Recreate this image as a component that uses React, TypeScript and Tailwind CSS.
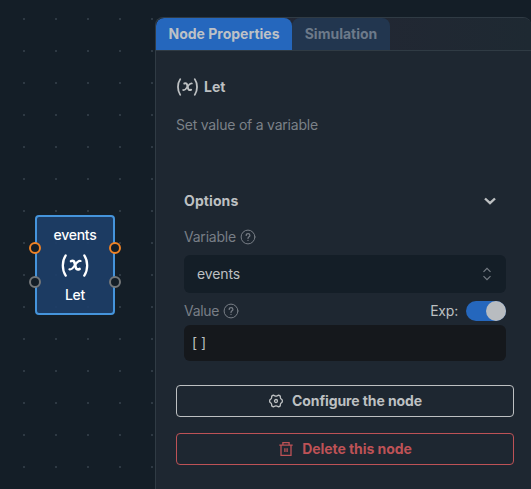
import React from "react";

function VariableIcon({ className }: { className: string }) {
  return (
    <svg
      className={className}
      viewBox="0 0 28 24"
      fill="none"
      stroke="currentColor"
      strokeLinecap="round"
      strokeLinejoin="round"
    >
      <path d="M4.300 1.500C.3 7.500.3 16.500 4.300 22.500M23.700 1.500c4 6 4 15 0 21" strokeWidth="2.400" />
      <path d="M9.800 7.400c2.600-1 3.400.2 4 2.600l.8 3.400c.6 2.400 1.600 3.300 4.200 2.200" strokeWidth="2.700" />
      <path d="M19.800 7.300c-2.300-.6-3.900 1.300-5.800 4.200-1.900 3-3.500 5.300-5.800 4.500" strokeWidth="2.300" />
    </svg>
  );
}

function GearIcon() {
  return (
    <svg className="size-4" viewBox="0 0 16 16" fill="none" stroke="currentColor" strokeLinejoin="round">
      <path
        d="M5.300 2.100 6.900 2.900Q8 3.500 9.100 2.900L10.700 2.100 12.300 3.100 12.400 4.800Q12.500 5.800 13.400 6.200L14.300 6.900V9.100L13.400 9.800Q12.500 10.200 12.400 11.200L12.300 12.900 10.700 13.900 9.100 13.100Q8 12.500 6.900 13.100L5.300 13.900 3.700 12.900 3.600 11.200Q3.500 10.200 2.600 9.800L1.700 9.100V6.900L2.600 6.200Q3.500 5.800 3.600 4.800L3.700 3.100Z"
        strokeWidth="1.300"
      />
      <circle cx="8" cy="8" r="1.500" strokeWidth="1.300" />
    </svg>
  );
}

function TrashIcon() {
  return (
    <svg className="size-4" viewBox="0 0 16 16" fill="none" stroke="currentColor" strokeWidth="1.300">
      <path d="M1.300 4.200h13.400M4.900 4V1.700h6.200V4M3 4.200v10.100h10V4.200M6.900 7.300v3.700M9.100 7.300v3.700" />
    </svg>
  );
}

function Help() {
  return (
    <svg
      className="size-4"
      viewBox="0 0 16 16"
      fill="none"
      stroke="currentColor"
      strokeWidth="1"
      strokeLinecap="round"
    >
      <circle cx="8" cy="8" r="6.900" />
      <path d="M6.200 6.400c0-2.500 3.700-2.500 3.700 0 0 1.300-1.900 1.500-1.900 3M8 11.300v.2" strokeWidth="1.200" />
    </svg>
  );
}

function Port({ className }: { className: string }) {
  return <span className={`absolute size-3 rounded-full border-2 bg-[#141e27] ${className}`} />;
}

function FlowNode() {
  return (
    <div className="absolute top-[215px] left-[35px] flex h-[100px] w-20 flex-col items-center rounded-[4px] border-2 border-[#4594db] bg-[#1d3e69]/90 pt-2 text-white">
      <span className="text-sm leading-5 font-medium tracking-[-0.25px]">events</span>
      <VariableIcon className="mt-[9px] h-[23px] w-7" />
      <span className="mt-2 text-sm leading-5 font-medium tracking-[-0.25px]">Let</span>
      <Port className="top-[25px] -left-2 border-[#f08224]" />
      <Port className="top-[25px] -right-2 border-[#f08224]" />
      <Port className="top-[59px] -left-2 border-[#747779]" />
      <Port className="top-[59px] -right-2 border-[#747779]" />
    </div>
  );
}

function Tabs() {
  return (
    <div className="flex h-[33px] shrink-0 overflow-hidden rounded-t-lg border-b border-[#303b44] bg-linear-to-r from-[#252a39] via-[#222733] to-[#1e2932] text-sm font-bold">
      <div className="flex w-[136px] items-center justify-center rounded-t-lg bg-[#2567bd] text-[#bdc1c6]">
        Node Properties
      </div>
      <div className="flex w-[98px] items-center justify-center rounded-t-lg bg-[#22364f] text-[#6d7a8a]">
        Simulation
      </div>
    </div>
  );
}

function Label({ children }: { children: React.ReactNode }) {
  return (
    <div className="flex items-center gap-1 text-[#787e86]">
      <span>{children}</span>
      <Help />
    </div>
  );
}

export default function App() {
  return (
    <div className="relative flex h-[489px] w-[531px] justify-end overflow-hidden bg-[#141e27] font-['Inter',sans-serif] text-sm leading-5">
      <svg className="absolute inset-0 size-full">
        <defs>
          <pattern id="grid-dots" x="23" y="18" width="32" height="32" patternUnits="userSpaceOnUse">
            <rect width="2" height="2" fill="#2e3943" />
          </pattern>
        </defs>
        <rect width="100%" height="100%" fill="url(#grid-dots)" />
      </svg>
      <FlowNode />
      <aside className="relative mt-[17px] flex w-[376px] flex-col rounded-t-lg border-t border-l border-[#303b44] bg-[#1e2731]">
        <Tabs />
        <div className="flex flex-col px-5 pt-[26px] pr-[17px]">
          <h2 className="flex h-5 items-center gap-[5px] font-bold text-[#bdc0c2]">
            <VariableIcon className="h-[18px] w-[23px]" />
            Let
          </h2>
          <p className="mt-[18px] tracking-[-0.22px] text-[#7b8188]">Set value of a variable</p>
          <section className="mx-2 mt-14 flex flex-col">
            <div className="flex items-center justify-between pr-2.5 font-bold text-[#bdc0c2]">
              <span className="tracking-[0.1px]">Options</span>
              <svg className="h-2 w-3" viewBox="0 0 12 8" fill="none" stroke="currentColor" strokeWidth="2.400">
                <path d="m1 1.500 5 4.700 5-4.700" />
              </svg>
            </div>
            <div className="mt-4 tracking-[-0.22px]">
              <Label>Variable</Label>
            </div>
            <div className="mt-2 flex h-[38px] items-center justify-between rounded-md bg-[#141e27] pr-3.5 pl-[13px] tracking-[-0.1px] text-[#bdc0c2]">
              events
              <svg className="h-3.5 w-2.5" viewBox="0 0 10 14" fill="none" stroke="#747b83" strokeWidth="1.200">
                <path d="m1.500 4.800 3.500-3.500 3.500 3.500M1.500 9.200 5 12.700l3.500-3.500" />
              </svg>
            </div>
            <div className="mt-2 flex h-5 items-center justify-between tracking-[-0.3px]">
              <Label>Value</Label>
              <div className="flex items-center gap-2 tracking-[-0.2px] text-[#bdc0c2]">
                Exp:
                <div className="flex h-5 w-10 justify-end rounded-full bg-[#2567bd]">
                  <span className="size-5 rounded-full bg-[#b8bcc0]" />
                </div>
              </div>
            </div>
            <div className="mt-1 flex h-9 items-center rounded-md bg-[#15181c] pl-2 text-[#bdc0c2]">[ ]</div>
          </section>
          <button className="mt-6 flex h-8 items-center justify-center gap-2 rounded-[4px] border border-[#bdc0c2] font-bold tracking-[-0.1px] text-[#bdc0c2]">
            <GearIcon />
            Configure the node
          </button>
          <button className="mt-4 flex h-8 items-center justify-center gap-2 rounded-[4px] border border-[#bd5256] font-bold tracking-[-0.05px] text-[#bd5256]">
            <TrashIcon />
            Delete this node
          </button>
        </div>
      </aside>
    </div>
  );
}
